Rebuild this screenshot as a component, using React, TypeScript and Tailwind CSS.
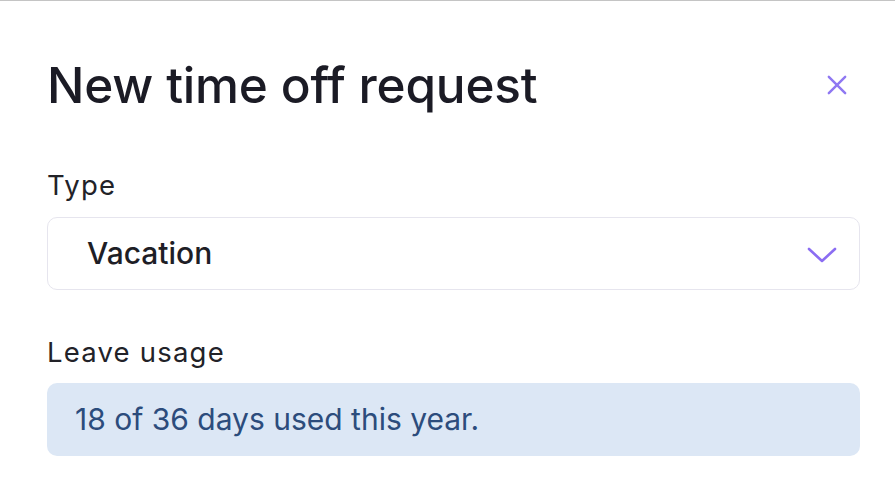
import React from 'react';

const App: React.FC = () => {
  return (
    <div className="w-[895px] h-[481px] bg-white border-t border-[#c4c4c4] overflow-hidden font-['Inter','Noto_Sans',sans-serif]">
      <div className="pl-[47px] pr-[35px] pt-[54px]">
        <div className="flex items-center justify-between">
          <h1 className="text-[49.5px] leading-[60px] font-medium text-[#1b1b25] tracking-[-0.2px]">New time off request</h1>
          <button className="w-[40px] h-[40px] mr-[3px] flex items-center justify-center text-[#8f78f2]" aria-label="Close">
            <svg width="28" height="28" viewBox="0 0 24 24" fill="none" stroke="currentColor" strokeWidth="2.1" strokeLinecap="round">
              <path d="M5 5L19 19M19 5L5 19" />
            </svg>
          </button>
        </div>

        <div className="mt-[53px]">
          <label className="block text-[27.5px] leading-[34px] tracking-[1.2px] text-[#222228]">Type</label>
          <div className="mt-[15px] h-[73px] rounded-[10px] border border-[#e6e5ee] flex items-center justify-between pl-[39px] pr-[22px]">
            <span className="text-[30px] font-medium text-[#1e1e26]">Vacation</span>
            <svg className="mt-[3px]" width="30" height="16" viewBox="0 0 30 16" fill="none" stroke="#8b6df2" strokeWidth="2.6" strokeLinecap="round" strokeLinejoin="round">
              <path d="M2 2L15 14L28 2" />
            </svg>
          </div>
        </div>

        <div className="mt-[45px]">
          <label className="block text-[27.5px] leading-[34px] tracking-[1.2px] text-[#222228]">Leave usage</label>
          <div className="mt-[14px] h-[73px] rounded-[10px] bg-[#dce7f5] flex items-center pl-[28px]">
            <span className="text-[30px] text-[#2c4c7c]">18 of 36 days used this year.</span>
          </div>
        </div>
      </div>
    </div>
  );
};

export default App;
